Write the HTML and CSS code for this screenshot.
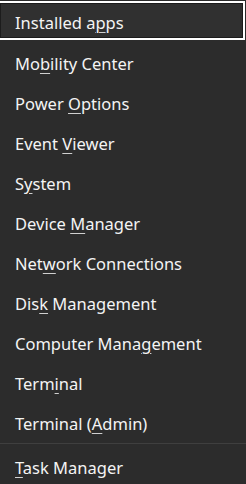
FILE: index.html
```html
<!DOCTYPE html>
<html lang="en">
<head>
<meta charset="utf-8">
<title>Quick Link Menu</title>
<link rel="stylesheet" href="styles.css">
</head>
<body>
<nav class="menu">
  <div class="item focused"><span>Installed a<u>p</u>ps</span></div>
  <div class="item"><span>Mo<u>b</u>ility Center</span></div>
  <div class="item"><span>Power <u>O</u>ptions</span></div>
  <div class="item"><span>Event <u>V</u>iewer</span></div>
  <div class="item"><span>S<u>y</u>stem</span></div>
  <div class="item"><span>Device <u>M</u>anager</span></div>
  <div class="item"><span>Net<u>w</u>ork Connections</span></div>
  <div class="item"><span>Dis<u>k</u> Management</span></div>
  <div class="item"><span>Computer Mana<u>g</u>ement</span></div>
  <div class="item"><span>Term<u>i</u>nal</span></div>
  <div class="item"><span>Terminal (<u>A</u>dmin)</span></div>
  <div class="separator"></div>
  <div class="item"><span><u>T</u>ask Manager</span></div>
</nav>
</body>
</html>
```
FILE: styles.css
```css
html, body {
  margin: 0;
  padding: 0;
  background: #2c2c2c;
}
body {
  width: 246px;
  height: 484px;
  overflow: hidden;
  font-family: "Noto Sans", "Open Sans", sans-serif;
  font-size: 16.5px;
  color: #f4f4f4;
}
.menu {
  display: flex;
  flex-direction: column;
  padding-top: 3px;
}
.item {
  height: 40px;
  display: flex;
  align-items: center;
  padding-left: 15px;
  box-sizing: border-box;
  white-space: nowrap;
}
.item u {
  text-decoration-thickness: 1px;
  text-underline-offset: 3px;
  text-decoration-color: #d0d0d0;
}
.item.focused {
  margin-top: -2px;
  margin-bottom: 3px;
  height: 39px;
  width: 245px;
  border: 2px solid #ffffff;
  border-left: none;
  padding-left: 15px;
  padding-top: 4px;
  background: #303030;
  box-shadow: inset 0 0 0 1px #1c1c1c;
}
.separator {
  height: 1px;
  background: #3f3f3f;
  margin-bottom: 3px;
}
```
